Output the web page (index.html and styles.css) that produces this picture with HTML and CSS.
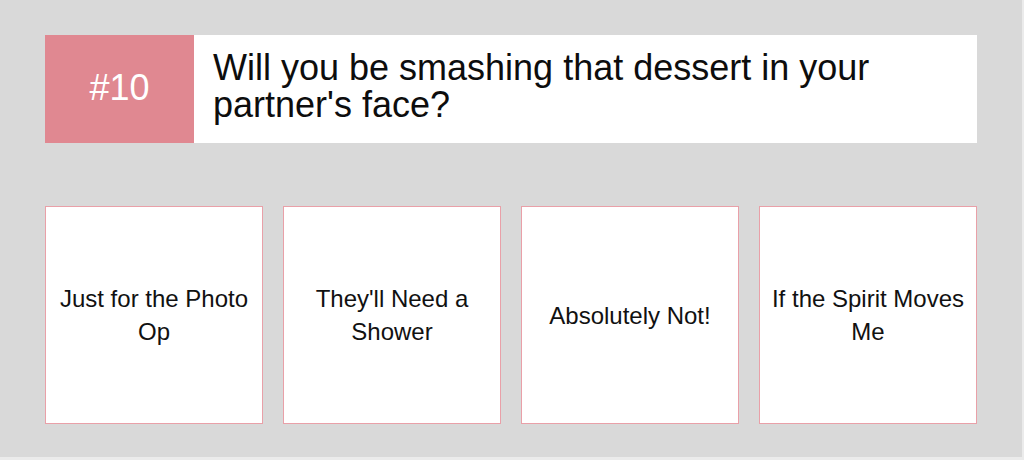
FILE: index.html
```html
<!DOCTYPE html>
<html lang="en">
<head>
<meta charset="utf-8">
<title>Question #10</title>
<link rel="stylesheet" href="styles.css">
</head>
<body>
<div class="page">
  <div class="question">
    <div class="number">#10</div>
    <div class="prompt">Will you be smashing that dessert in your partner's face?</div>
  </div>
  <div class="answers">
    <div class="answer">Just for the Photo Op</div>
    <div class="answer">They'll Need a Shower</div>
    <div class="answer">Absolutely Not!</div>
    <div class="answer">If the Spirit Moves Me</div>
  </div>
</div>
</body>
</html>
```

FILE: styles.css
```css
* { box-sizing: border-box; }
html, body {
  margin: 0;
  padding: 0;
  background: #ebebeb;
}
body {
  font-family: "Liberation Sans", Arial, Helvetica, sans-serif;
  color: #111;
}
.page {
  width: 1022px;
  height: 457px;
  background: #d9d9d9;
  padding: 35px 45px 0 45px;
}
.question {
  display: flex;
  width: 932px;
  height: 108px;
  background: #fff;
}
.number {
  width: 149px;
  flex: none;
  background: #e08891;
  color: #fff;
  font-size: 36px;
  display: flex;
  align-items: center;
  justify-content: center;
  padding-bottom: 2px;
}
.prompt {
  padding: 14px 18px 0 19px;
  font-size: 36px;
  line-height: 37px;
  color: #0d0d0d;
}
.answers {
  display: grid;
  grid-template-columns: repeat(4, 218px);
  gap: 20px;
  margin-top: 63px;
}
.answer {
  height: 218px;
  background: #fff;
  border: 1px solid #e9a0a8;
  display: flex;
  align-items: center;
  justify-content: center;
  text-align: center;
  font-size: 24px;
  line-height: 33px;
  padding: 0 10px;
  color: #111;
}
```
